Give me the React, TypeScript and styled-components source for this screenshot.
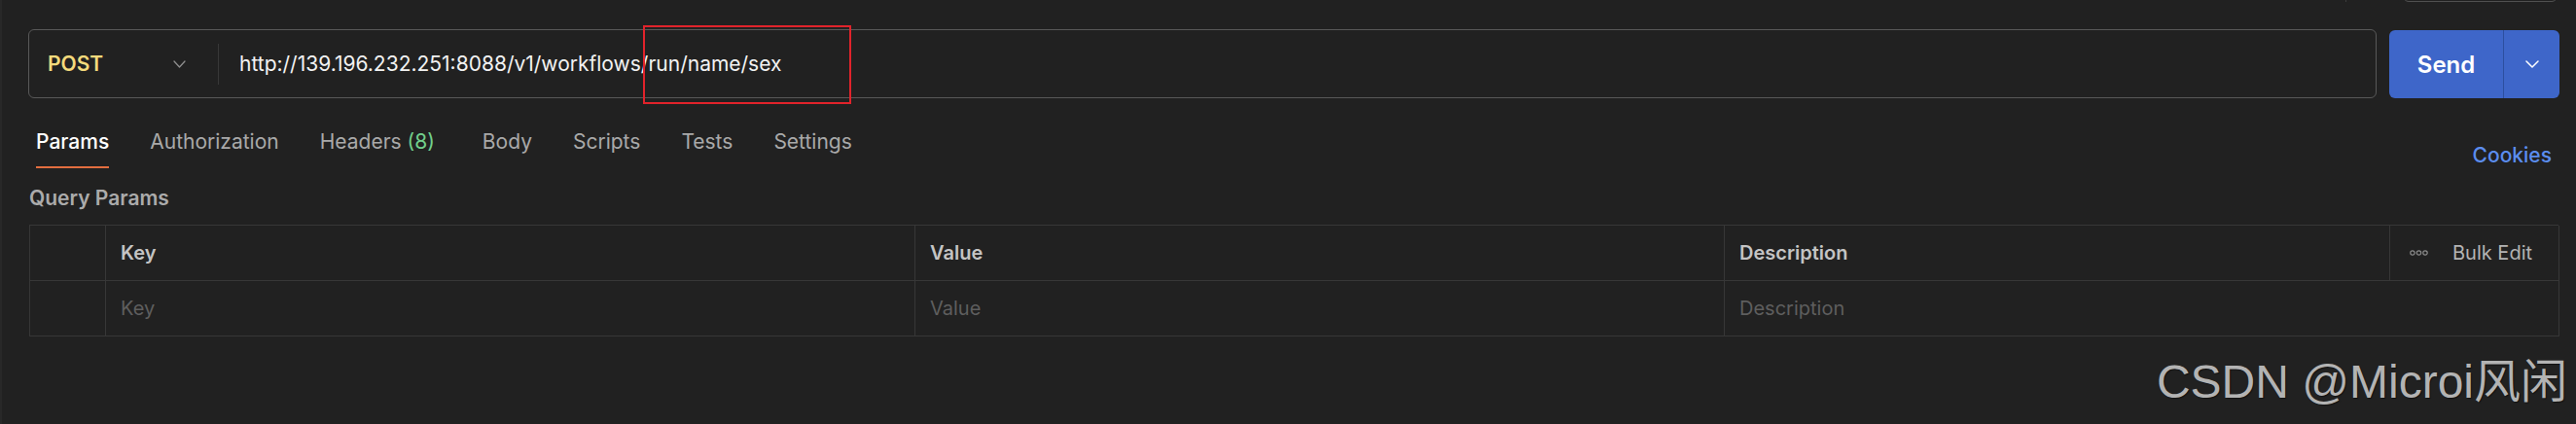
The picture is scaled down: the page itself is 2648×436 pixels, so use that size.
import React from "react";
import styled, { createGlobalStyle } from "styled-components";

const GlobalStyle = createGlobalStyle`
  html, body { margin: 0; padding: 0; background: #212121; }
  body { font-family: Inter, "Noto Sans", sans-serif; }
  * { box-sizing: border-box; }
`;

const Page = styled.div`
  position: relative;
  width: 2648px;
  height: 436px;
  overflow: hidden;
  background: #212121;
  border-left: 2px solid #282828;
  padding: 0 17px 0 27px;
  display: flex;
  flex-direction: column;
  font-family: Inter, "Noto Sans", sans-serif;
`;

const TopStrip = styled.div`
  height: 2px;
  display: flex;
  justify-content: flex-end;
  align-items: flex-end;
  overflow: hidden;
`;

const StubLine = styled.div`
  width: 1px;
  height: 2px;
  background: #3c3c3c;
  margin-right: 58px;
`;

const StubBox = styled.div`
  width: 159px;
  height: 30px;
  flex-shrink: 0;
  border: 1px solid #505050;
  border-radius: 6px;
  margin-right: 2px;
`;

const RequestRow = styled.div`
  margin-top: 28px;
  height: 71px;
  display: flex;
  gap: 13px;
`;

const UrlBox = styled.div`
  flex: 1;
  display: flex;
  align-items: center;
  border: 1px solid #585858;
  border-radius: 6px;
`;

const MethodSelect = styled.div`
  width: 194px;
  height: 100%;
  display: flex;
  align-items: center;
  justify-content: space-between;
  padding: 0 33px 0 19px;
`;

const Method = styled.span`
  color: #f3da7c;
  font-size: 21px;
  font-weight: 600;
`;

const VDivider = styled.div`
  width: 1px;
  height: 42px;
  background: #383838;
`;

const UrlText = styled.span`
  padding-left: 21px;
  color: #f2f2f2;
  font-size: 21px;
  font-weight: 400;
  white-space: nowrap;
`;

const SendGroup = styled.div`
  width: 175px;
  margin-top: 1px;
  display: flex;
  border-radius: 6px;
  overflow: hidden;
  background: #3e66c9;
`;

const SendButton = styled.div`
  width: 118px;
  display: flex;
  align-items: center;
  justify-content: center;
  color: #ffffff;
  font-size: 24px;
  font-weight: 600;
  border-right: 1px solid #2c4f9f;
`;

const SendMenu = styled.div`
  flex: 1;
  display: flex;
  align-items: center;
  justify-content: center;
`;

const TabsRow = styled.div`
  margin-top: 31px;
  display: flex;
  align-items: flex-start;
  padding: 0 8px;
`;

const Tabs = styled.div`
  display: flex;
  gap: 42px;
  flex: 1;
`;

const Tab = styled.div<{ $active?: boolean; $extra?: number }>`
  line-height: 28px;
  padding-bottom: 11px;
  border-bottom: 2px solid ${(p) => (p.$active ? "#e26e3f" : "transparent")};
  color: ${(p) => (p.$active ? "#ffffff" : "#a9a9a9")};
  font-size: 21px;
  font-weight: ${(p) => (p.$active ? 500 : 400)};
  margin-right: ${(p) => p.$extra ?? 0}px;
  white-space: nowrap;
`;

const Count = styled.span`
  color: #72cf8c;
`;

const Cookies = styled.div`
  margin-top: 14px;
  line-height: 28px;
  color: #5b8def;
  font-size: 21px;
  font-weight: 500;
`;

const SectionTitle = styled.div`
  margin: 16px 0 0 1px;
  line-height: 28px;
  color: #ababab;
  font-size: 21px;
  font-weight: 600;
`;

const Table = styled.div`
  margin: 13px 1px 0;
  display: grid;
  grid-template-columns: 78px 832px 832px 684px 174px;
  grid-auto-rows: 57px;
  border-top: 1px solid #373737;
  border-left: 1px solid #373737;
`;

const Cell = styled.div<{ $span?: number; $head?: boolean }>`
  grid-column: span ${(p) => p.$span ?? 1};
  display: flex;
  align-items: center;
  padding-left: 15px;
  border-right: 1px solid #373737;
  border-bottom: 1px solid #373737;
  font-size: 20px;
  font-weight: ${(p) => (p.$head ? 600 : 400)};
  color: ${(p) => (p.$head ? "#c4c4c4" : "#5e5e5e")};
  white-space: nowrap;
`;

const BulkCell = styled(Cell)`
  padding-left: 20px;
  gap: 25px;
  font-weight: 400;
  color: #b3b3b3;
`;

const Annotation = styled.div`
  position: absolute;
  left: 659px;
  top: 26px;
  width: 214px;
  height: 81px;
  border: 2px solid #e1232b;
  pointer-events: none;
`;

const Watermark = styled.div`
  position: absolute;
  right: 9px;
  top: 369px;
  line-height: 48px;
  font-family: "Liberation Sans", Arial, "Noto Sans CJK SC", sans-serif;
  font-size: 48px;
  color: #b3b3b3;
  text-shadow: 1px 1px 1px rgba(0, 0, 0, 0.45);
  white-space: nowrap;
`;

const Chevron = ({ color, w, h, sw }: { color: string; w: number; h: number; sw: number }) => (
  <svg width={w} height={h} viewBox={`0 0 ${w} ${h}`} fill="none">
    <polyline
      points={`1,1 ${w / 2},${h - 1} ${w - 1},1`}
      stroke={color}
      strokeWidth={sw}
      strokeLinecap="round"
      strokeLinejoin="round"
    />
  </svg>
);

const Dots = () => (
  <svg width="19" height="6" viewBox="0 0 19 6" fill="none">
    <circle cx="3" cy="3" r="2.2" stroke="#8c8c8c" strokeWidth="1.2" />
    <circle cx="9.5" cy="3" r="2.2" stroke="#8c8c8c" strokeWidth="1.2" />
    <circle cx="16" cy="3" r="2.2" stroke="#8c8c8c" strokeWidth="1.2" />
  </svg>
);

export default function App() {
  return (
    <>
      <GlobalStyle />
      <Page>
        <TopStrip>
          <StubLine />
          <StubBox />
        </TopStrip>
        <RequestRow>
          <UrlBox>
            <MethodSelect>
              <Method>POST</Method>
              <Chevron color="#8e8e8e" w={13} h={8} sw={1.3} />
            </MethodSelect>
            <VDivider />
            <UrlText>http://139.196.232.251:8088/v1/workflows/run/name/sex</UrlText>
          </UrlBox>
          <SendGroup>
            <SendButton>Send</SendButton>
            <SendMenu>
              <Chevron color="#ffffff" w={14} h={8} sw={1.5} />
            </SendMenu>
          </SendGroup>
        </RequestRow>
        <TabsRow>
          <Tabs>
            <Tab $active>Params</Tab>
            <Tab>Authorization</Tab>
            <Tab $extra={7}>
              Headers <Count>(8)</Count>
            </Tab>
            <Tab>Body</Tab>
            <Tab>Scripts</Tab>
            <Tab>Tests</Tab>
            <Tab>Settings</Tab>
          </Tabs>
          <Cookies>Cookies</Cookies>
        </TabsRow>
        <SectionTitle>Query Params</SectionTitle>
        <Table>
          <Cell $head />
          <Cell $head>Key</Cell>
          <Cell $head>Value</Cell>
          <Cell $head>Description</Cell>
          <BulkCell $head>
            <Dots />
            Bulk Edit
          </BulkCell>
          <Cell />
          <Cell>Key</Cell>
          <Cell>Value</Cell>
          <Cell $span={2}>Description</Cell>
        </Table>
        <Annotation />
        <Watermark>CSDN @Microi风闲</Watermark>
      </Page>
    </>
  );
}
